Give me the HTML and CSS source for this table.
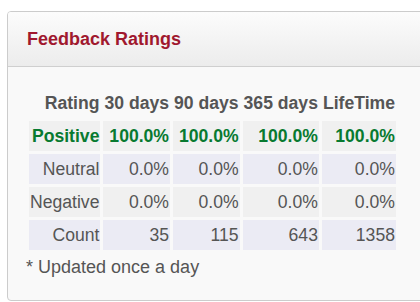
FILE: index.html
```html
<!DOCTYPE html>
<html>
<head>
<meta charset="utf-8">
<link rel="stylesheet" href="styles.css">
</head>
<body>
<div class="panel">
  <div class="panel-head"><h2 class="title">Feedback Ratings</h2></div>
  <div class="panel-body">
    <table class="ratings">
      <thead>
        <tr><th>Rating</th><th>30 days</th><th>90 days</th><th>365 days</th><th>LifeTime</th></tr>
      </thead>
      <tbody>
        <tr class="row-a positive"><td>Positive</td><td>100.0%</td><td>100.0%</td><td>100.0%</td><td>100.0%</td></tr>
        <tr class="row-b"><td>Neutral</td><td>0.0%</td><td>0.0%</td><td>0.0%</td><td>0.0%</td></tr>
        <tr class="row-a"><td>Negative</td><td>0.0%</td><td>0.0%</td><td>0.0%</td><td>0.0%</td></tr>
        <tr class="row-b"><td>Count</td><td>35</td><td>115</td><td>643</td><td>1358</td></tr>
      </tbody>
    </table>
    <p class="note">* Updated once a day</p>
  </div>
</div>
</body>
</html>
```
FILE: styles.css
```css
html, body {
  margin: 0;
  padding: 0;
  overflow: hidden;
  background: #ffffff;
  font-family: "Liberation Sans", Arial, sans-serif;
}
.panel {
  margin: 11px 0 0 7px;
  width: 440px;
  border: 1px solid #cccccc;
  border-radius: 4px;
  background: #f9f9f9;
  overflow: hidden;
}
.panel-head {
  height: 54px;
  display: flex;
  align-items: center;
  padding: 0 19px;
  background: linear-gradient(#fcfcfc, #ececec);
  border-bottom: 1px solid #cfcfcf;
}
.title {
  margin: 0;
  font-size: 18px;
  font-weight: bold;
  color: #a0182e;
}
.panel-body {
  padding: 18px 18px 22px 18px;
}
.ratings {
  border-collapse: separate;
  border-spacing: 3px;
  font-size: 17.6px;
  line-height: 20px;
  color: #555555;
}
.ratings th, .ratings td {
  padding: 5px 1px;
  text-align: right;
  white-space: nowrap;
}
.ratings th {
  font-weight: bold;
  color: #555555;
}
.row-a td { background: #f0f0f0; }
.row-b td { background: #ebebf4; }
.positive td {
  color: #087a30;
  font-weight: bold;
}
.note {
  margin: 4px 0 0 0;
  font-size: 18px;
  line-height: 21px;
  color: #555555;
}
```
